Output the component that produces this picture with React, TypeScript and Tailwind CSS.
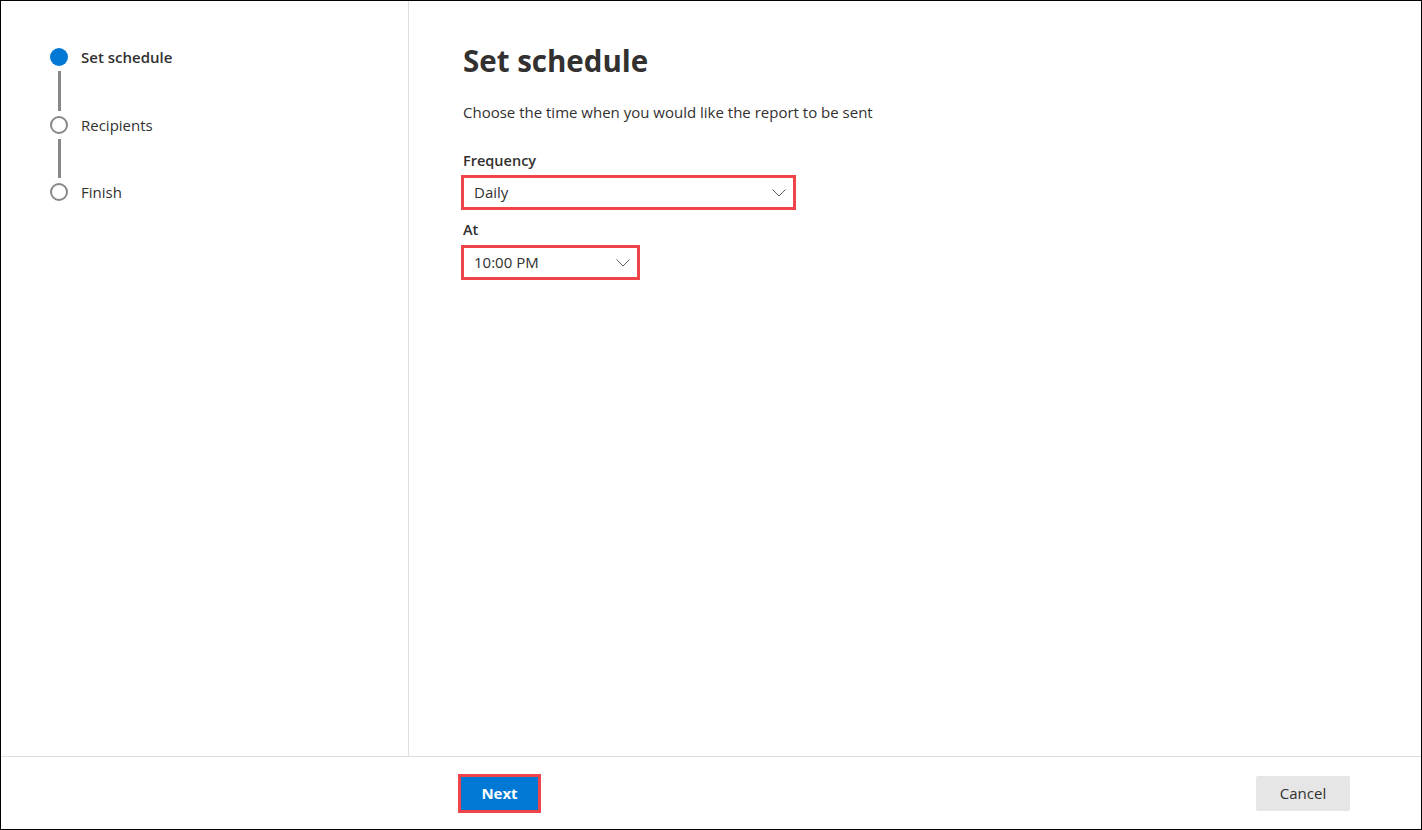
const steps = [
  { label: "Set schedule", active: true },
  { label: "Recipients", active: false },
  { label: "Finish", active: false },
];

function Stepper() {
  return (
    <div className="flex flex-col">
      {steps.map((s, i) => (
        <div key={s.label} className="flex gap-[13px]">
          <div className="flex w-[18px] flex-col items-center">
            {s.active ? (
              <div className="h-[18px] w-[18px] rounded-full bg-[#0078d4]" />
            ) : (
              <div className="h-[18px] w-[18px] rounded-full border-2 border-[#8a8886] bg-white" />
            )}
            {i < steps.length - 1 && <div className="my-[5px] h-[39.5px] w-[3px] bg-[#8a8886]" />}
          </div>
          <span
            className={`-mt-[1px] text-[15px] leading-[20px] text-[#323130] ${s.active ? "font-semibold" : "font-normal"}`}
          >
            {s.label}
          </span>
        </div>
      ))}
    </div>
  );
}

function Dropdown({ value, width }: { value: string; width: string }) {
  return (
    <div className={`-ml-[2px] flex h-[35px] ${width} items-center justify-between border-[3px] border-[#f0434a] bg-white pl-[10px] pr-[6px]`}>
      <span className="text-[15px] text-[#323130]">{value}</span>
      <svg width="14" height="8" viewBox="0 0 14 8" fill="none" className="mr-[1px]">
        <path d="M0.5 0.5 L7 7 L13.5 0.5" stroke="#605e5c" strokeWidth="1" />
      </svg>
    </div>
  );
}

export default function App() {
  return (
    <div
      className="flex h-[830px] w-[1422px] flex-col border border-black bg-white text-[#323130]"
      style={{ fontFamily: '"Segoe UI", "Open Sans", "Noto Sans", sans-serif' }}
    >
      <div className="flex min-h-0 flex-1">
        <aside className="w-[408px] shrink-0 border-r border-[#e1dfdd] pl-[49px] pt-[47px]">
          <Stepper />
        </aside>
        <main className="flex-1 pl-[54px] pt-[40px]">
          <h1 className="text-[29.5px] font-bold leading-[40px] text-[#323130]">Set schedule</h1>
          <p className="mt-[21px] text-[15px] leading-[20px] text-[#323130]">
            Choose the time when you would like the report to be sent
          </p>
          <div className="mt-[29px] flex flex-col">
            <label className="text-[14.5px] font-semibold leading-[20px]">Frequency</label>
            <div className="mt-[4px]">
              <Dropdown value="Daily" width="w-[335px]" />
            </div>
            <label className="mt-[10px] text-[14.5px] font-semibold leading-[20px]">At</label>
            <div className="mt-[5px]">
              <Dropdown value="10:00 PM" width="w-[179px]" />
            </div>
          </div>
        </main>
      </div>
      <footer className="flex h-[73px] shrink-0 items-center justify-between border-t border-[#e1dfdd] pl-[457px] pr-[71px]">
        <button className="h-[39px] w-[83px] border-[3px] border-[#f0434a] bg-[#0078d4] text-[15px] font-bold text-white">
          Next
        </button>
        <button className="h-[35px] w-[94px] rounded-[2px] bg-[#e6e6e6] text-[15px] text-[#323130]">Cancel</button>
      </footer>
    </div>
  );
}
